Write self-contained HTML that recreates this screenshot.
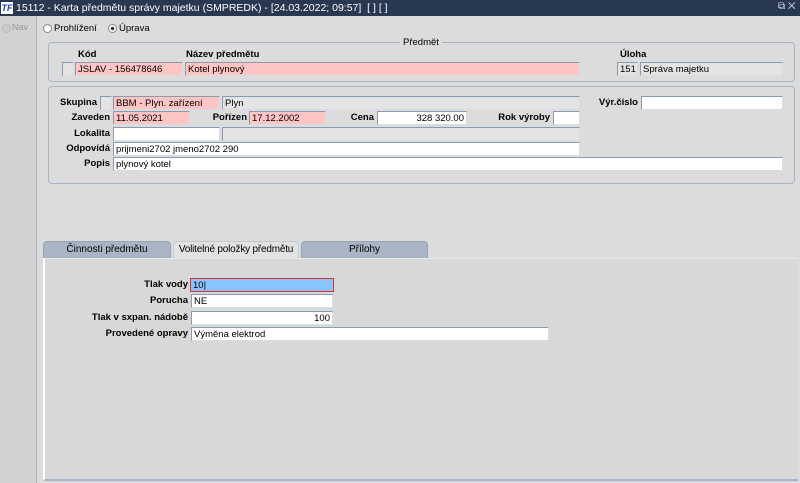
<!DOCTYPE html>
<html><head><meta charset="utf-8"><style>
*{margin:0;padding:0;box-sizing:border-box}
body{width:800px;height:483px;background:#dcdcdc;font-family:"Liberation Sans",sans-serif;font-size:10px;color:#000;position:relative;overflow:hidden}
.a{position:absolute}
.f{position:absolute;height:14px;border:1px solid #8a9ab0;border-right-color:#d8dde4;border-bottom-color:#d8dde4;background:#fff;padding:1px 2px;line-height:11px;white-space:nowrap;overflow:hidden;font-size:9.5px}
.p{background:#ffc4c4}
.g{background:#e4e4e4}
.r{text-align:right}
.l{position:absolute;font-weight:bold;font-size:9.5px;line-height:14px;text-align:right;white-space:nowrap}
.box{position:absolute;border:1px solid #a8b4c4;border-radius:4px}
.tab{position:absolute;top:241px;height:18px;border:1px solid #98a4b4;border-bottom:none;border-radius:4px 4px 0 0;text-align:center;line-height:16px;font-size:10px;background:#a9b5c5;white-space:nowrap;overflow:visible}
.rad{position:absolute;width:9px;height:9px;border-radius:50%;border:1px solid #888;background:#fff}
</style></head><body>
<div class="a" style="left:0;top:0;width:800px;height:16px;background:#283850;color:#fff;font-size:10.5px;line-height:16px;padding-left:16px">15112 - Karta předmětu správy majetku (SMPREDK) - [24.03.2022; 09:57] &nbsp;[ ] [ ]</div>
<div class="a" style="left:1px;top:2px;width:12px;height:12px;background:#fff;color:#1a40c0;font-weight:bold;font-style:italic;font-size:9px;line-height:12px;text-align:center">TF</div>
<div class="a" style="left:778px;top:1px;color:#dde;font-size:10px">⧉ ✕</div>
<div class="a" style="left:0;top:16px;width:37px;height:467px;background:#d2d2d2;border-right:1px solid #b0b8c8"></div>
<div class="rad" style="left:2px;top:24px;background:#ccc;border-color:#bbb"></div>
<div class="a" style="left:12px;top:22px;color:#999;font-size:9px">Nav</div>
<div class="rad" style="left:43px;top:24px"></div><div class="a" style="left:54px;top:23px;font-size:9.5px">Prohlížení</div>
<div class="rad" style="left:108px;top:24px;background:radial-gradient(#333 30%,#fff 40%)"></div><div class="a" style="left:119px;top:23px;font-size:9.5px">Úprava</div>

<div class="box" style="left:48px;top:42px;width:747px;height:40px"></div>
<div class="a" style="left:400px;top:37px;background:#dcdcdc;padding:0 3px;font-size:9.5px">Předmět</div>
<div class="l" style="left:78px;top:48px">Kód</div>
<div class="l" style="left:186px;top:48px">Název předmětu</div>
<div class="l" style="left:620px;top:48px">Úloha</div>
<div class="f g" style="left:62px;top:62px;width:12px"></div>
<div class="f p" style="left:75px;top:62px;width:108px">JSLAV - 156478646</div>
<div class="f p" style="left:185px;top:62px;width:395px">Kotel plynový</div>
<div class="f g" style="left:617px;top:62px;width:21px">151</div>
<div class="f g" style="left:640px;top:62px;width:143px">Správa majetku</div>

<div class="box" style="left:48px;top:86px;width:747px;height:98px"></div>
<div class="l" style="left:50px;top:96px;width:47px">Skupina</div>
<div class="f g" style="left:100px;top:96px;width:12px"></div>
<div class="f p" style="left:113px;top:96px;width:107px">BBM - Plyn. zařízení</div>
<div class="f g" style="left:222px;top:96px;width:358px">Plyn</div>
<div class="l" style="left:580px;top:96px;width:58px">Výr.čislo</div>
<div class="f" style="left:641px;top:96px;width:142px"></div>
<div class="l" style="left:50px;top:111px;width:60px">Zaveden</div>
<div class="f p" style="left:113px;top:111px;width:77px">11.05.2021</div>
<div class="l" style="left:200px;top:111px;width:47px">Pořízen</div>
<div class="f p" style="left:249px;top:111px;width:77px">17.12.2002</div>
<div class="l" style="left:330px;top:111px;width:44px">Cena</div>
<div class="f r" style="left:377px;top:111px;width:90px">328 320.00</div>
<div class="l" style="left:480px;top:111px;width:70px">Rok výroby</div>
<div class="f" style="left:553px;top:111px;width:27px"></div>
<div class="l" style="left:50px;top:127px;width:60px">Lokalita</div>
<div class="f" style="left:113px;top:127px;width:107px"></div>
<div class="f g" style="left:222px;top:127px;width:358px"></div>
<div class="l" style="left:50px;top:142px;width:60px">Odpovídá</div>
<div class="f" style="left:113px;top:142px;width:467px">prijmeni2702 jmeno2702 290</div>
<div class="l" style="left:50px;top:157px;width:60px">Popis</div>
<div class="f" style="left:113px;top:157px;width:670px">plynový kotel</div>

<div class="tab" style="left:43px;width:128px">Činnosti předmětu</div>
<div class="tab" style="left:173px;width:126px;background:#e2e2e2;border-color:#c0c8d4;letter-spacing:-0.2px">Volitelné položky předmětu</div>
<div class="tab" style="left:301px;width:127px">Přílohy</div>
<div class="a" style="left:43px;top:258px;width:755px;height:223px;background:#d8d8d8;border-left:2px solid #fff;border-bottom:2px solid #a8b4c8;border-top:1px solid #e8e8e8"></div>
<div class="l" style="left:60px;top:278px;width:128px">Tlak vody</div>
<div class="f" style="left:190px;top:278px;width:144px;background:#88c4ff;border:1px solid #e03030">10|</div>
<div class="l" style="left:60px;top:294px;width:128px">Porucha</div>
<div class="f" style="left:191px;top:294px;width:142px">NE</div>
<div class="l" style="left:40px;top:311px;width:148px">Tlak v sxpan. nádobě</div>
<div class="f r" style="left:191px;top:311px;width:142px">100</div>
<div class="l" style="left:40px;top:327px;width:148px">Provedené opravy</div>
<div class="f" style="left:191px;top:327px;width:358px">Výměna elektrod</div>
</body></html>
